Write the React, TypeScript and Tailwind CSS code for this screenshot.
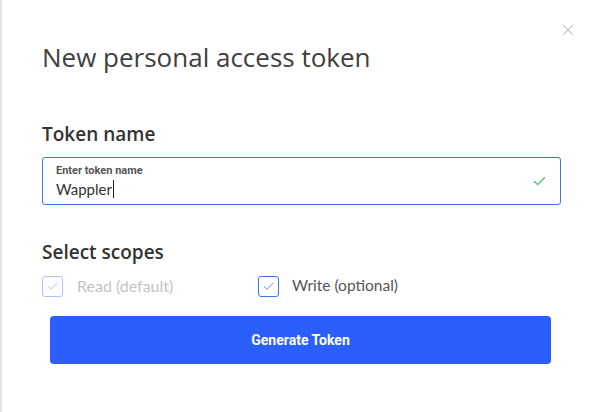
import { X, Check } from 'lucide-react'

export default function App() {
  return (
    <div className="h-[412px] w-[597px] bg-white" style={{ fontFamily: 'Lato, "Open Sans", sans-serif' }}>
      <div className="relative h-full border-l-2 border-[#e4e4e4] pl-[40px] pr-[36px]">
        {/* close */}
        <button className="absolute right-[20px] top-[21px] text-[#c8c8c8]">
          <X size={18} strokeWidth={1.5} />
        </button>

        {/* Header */}
        <h1
          className="pt-[41px] text-[26px] font-normal leading-[32px] text-[#404040]"
          style={{ fontFamily: '"Open Sans", sans-serif' }}
        >
          New personal access token
        </h1>

        {/* Token name */}
        <h2
          className="mt-[48px] text-[19px] font-semibold leading-[26px] text-[#333]"
          style={{ fontFamily: '"Open Sans", sans-serif' }}
        >
          Token name
        </h2>
        <div className="mt-[10px] flex h-[48px] items-center rounded-[3px] border border-[#3a76ec] pl-[13px] pr-[13px]">
          <div className="flex-1">
            <p className="text-[11px] font-bold leading-[12px] text-[#555]" style={{ fontFamily: 'Roboto, sans-serif' }}>
              Enter token name
            </p>
            <p className="mt-[3px] flex items-center text-[15px] leading-[18px] text-[#333]">
              Wappler
              <span className="ml-[1px] inline-block h-[18px] w-px bg-[#222]" />
            </p>
          </div>
          <Check size={15} strokeWidth={2} className="text-[#47c16a]" />
        </div>

        {/* Scopes */}
        <h2
          className="mt-[34px] text-[19px] font-semibold leading-[26px] text-[#333]"
          style={{ fontFamily: '"Open Sans", sans-serif' }}
        >
          Select scopes
        </h2>
        <div className="mt-[9px] flex items-center">
          <label className="flex w-[216px] items-center">
            <span className="flex h-[21px] w-[21px] items-center justify-center rounded-[3px] border border-[#aac4f5] text-[#9bb8ef]">
              <Check size={13} strokeWidth={1.5} />
            </span>
            <span className="ml-[14px] text-[16px] text-[#c4c4c4]">Read (default)</span>
          </label>
          <label className="flex items-center">
            <span className="flex h-[21px] w-[21px] items-center justify-center rounded-[3px] border border-[#3a76ec] text-[#3a76ec]">
              <Check size={13} strokeWidth={1.5} />
            </span>
            <span className="ml-[13px] text-[15.5px] text-[#555]">Write (optional)</span>
          </label>
        </div>

        <div className="mt-[18px] pl-[8px] pr-[10px]">
          <button
            className="flex h-[48px] w-full items-center justify-center rounded-[4px] bg-[#2b5ffc] text-[14px] font-bold text-white"
            style={{ fontFamily: 'Roboto, sans-serif' }}
          >
            Generate Token
          </button>
        </div>
      </div>
    </div>
  )
}
